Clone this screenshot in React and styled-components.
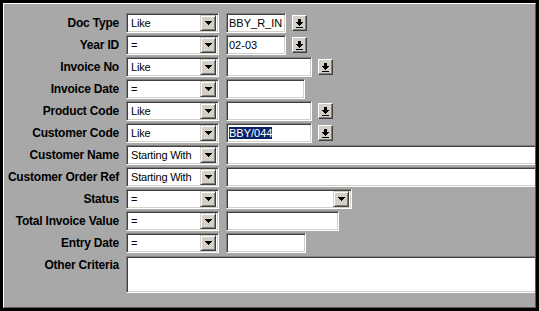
import React from "react";
import styled, { createGlobalStyle } from "styled-components";

const GlobalStyle = createGlobalStyle`
  html, body {
    margin: 0;
    padding: 0;
    background: #000;
  }
  body {
    font-family: "Liberation Sans", Arial, sans-serif;
  }
`;

const Frame = styled.div`
  box-sizing: border-box;
  margin: 3px;
  width: 533px;
  height: 305px;
  background: #a8a8a8;
  border: 1px solid;
  border-color: #ffffff #5c5c5c #5c5c5c #ffffff;
  overflow: hidden;
`;

const Form = styled.div`
  display: grid;
  grid-template-columns: 115px 93px 1fr;
  grid-template-rows: repeat(11, 20px) 37px;
  column-gap: 7px;
  row-gap: 2px;
  padding-top: 9px;
`;

const Label = styled.div`
  font-weight: bold;
  font-size: 12px;
  letter-spacing: -0.2px;
  line-height: ${(p) => (p.$top ? "14px" : "20px")};
  align-self: ${(p) => (p.$top ? "start" : "stretch")};
  margin-top: ${(p) => (p.$top ? "3px" : "0")};
  text-align: right;
  color: #000;
  white-space: nowrap;
`;

const sunken = `
  box-sizing: border-box;
  border: 1px solid;
  border-color: #808080 #ffffff #ffffff #808080;
  box-shadow: inset 1px 1px 0 #404040, inset -1px -1px 0 #d4d0c8;
  background: #fff;
`;

const Combo = styled.div`
  ${sunken}
  width: ${(p) => p.$w}px;
  height: 20px;
  display: flex;
  align-items: center;
  padding: 2px;
  flex: none;
`;

const ComboText = styled.div`
  flex: 1;
  font-size: 11px;
  letter-spacing: -0.2px;
  padding-left: 2px;
  color: #000;
  white-space: nowrap;
  overflow: hidden;
`;

const DropButton = styled.div`
  box-sizing: border-box;
  width: 16px;
  height: 16px;
  background: #d4d0c8;
  border: 1px solid;
  border-color: #d4d0c8 #404040 #404040 #d4d0c8;
  box-shadow: inset 1px 1px 0 #ffffff, inset -1px -1px 0 #808080;
  display: flex;
  align-items: center;
  justify-content: center;
`;

const ValueCell = styled.div`
  display: flex;
  align-items: center;
  gap: 6px;
`;

const Field = styled.div`
  ${sunken}
  width: ${(p) => p.$w}px;
  height: 20px;
  flex: none;
  padding: 0 2px;
  font-size: 11px;
  line-height: 18px;
  color: #000;
  white-space: nowrap;
  overflow: hidden;
`;

const Selected = styled.span`
  background: #0a246a;
  color: #fff;
`;

const LookupButton = styled.div`
  box-sizing: border-box;
  width: 15px;
  height: 16px;
  flex: none;
  background: #d4d0c8;
  border: 1px solid;
  border-color: #ffffff #404040 #404040 #ffffff;
  box-shadow: inset -1px -1px 0 #808080;
  display: flex;
  align-items: center;
  justify-content: center;
`;

const Memo = styled.div`
  ${sunken}
  grid-column: 2 / -1;
  width: 440px;
  height: 37px;
  margin-top: 1px;
`;

const DownArrow = () => (
  <svg width="7" height="4" viewBox="0 0 7 4" shapeRendering="crispEdges">
    <polygon points="0,0 7,0 3.5,4" fill="#000" />
  </svg>
);

const LookupIcon = () => (
  <svg width="7" height="9" viewBox="0 0 7 9" shapeRendering="crispEdges">
    <rect x="2" y="0" width="3" height="3" fill="#000" />
    <polygon points="0,3 7,3 3.5,7" fill="#000" />
    <rect x="0" y="8" width="7" height="1" fill="#000" />
  </svg>
);

const Select = ({ w = 93, children }) => (
  <Combo $w={w}>
    <ComboText>{children}</ComboText>
    <DropButton>
      <DownArrow />
    </DropButton>
  </Combo>
);

const rows = [
  { label: "Doc Type", op: "Like", field: 60, text: "BBY_R_IN", lookup: true },
  { label: "Year ID", op: "=", field: 60, text: "02-03", lookup: true },
  { label: "Invoice No", op: "Like", field: 86, lookup: true },
  { label: "Invoice Date", op: "=", field: 79 },
  { label: "Product Code", op: "Like", field: 86, lookup: true },
  { label: "Customer Code", op: "Like", field: 86, selected: "BBY/044", lookup: true },
  { label: "Customer Name", op: "Starting With", field: 330 },
  { label: "Customer Order Ref", op: "Starting With", field: 330 },
  { label: "Status", op: "=", combo: 126 },
  { label: "Total Invoice Value", op: "=", field: 113 },
  { label: "Entry Date", op: "=", field: 80 },
];

export default function App() {
  return (
    <>
      <GlobalStyle />
      <Frame>
        <Form>
          {rows.map((r) => (
            <React.Fragment key={r.label}>
              <Label>{r.label}</Label>
              <Select>{r.op}</Select>
              <ValueCell>
                {r.combo ? (
                  <Select w={r.combo} />
                ) : (
                  <Field $w={r.field}>
                    {r.selected ? <Selected>{r.selected}</Selected> : r.text}
                  </Field>
                )}
                {r.lookup && (
                  <LookupButton>
                    <LookupIcon />
                  </LookupButton>
                )}
              </ValueCell>
            </React.Fragment>
          ))}
          <Label $top>Other Criteria</Label>
          <Memo />
        </Form>
      </Frame>
    </>
  );
}
